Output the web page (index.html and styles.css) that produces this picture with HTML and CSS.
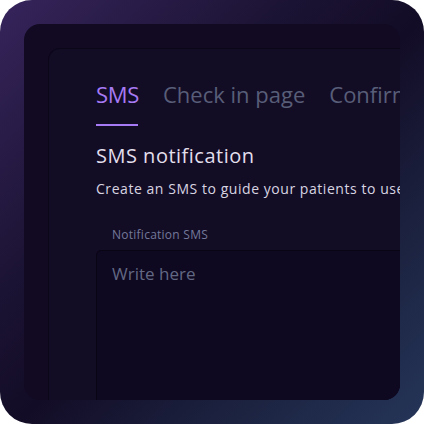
FILE: index.html
```html
<!DOCTYPE html>
<html>
<head>
<meta charset="utf-8">
<link rel="stylesheet" href="styles.css">
</head>
<body>
<div class="frame">
  <div class="panel">
    <div class="sheet">
      <div class="tabs">
        <div class="tab active">SMS</div>
        <div class="tab">Check in page</div>
        <div class="tab">Confirmation</div>
      </div>
      <h1 class="title">SMS notification</h1>
      <p class="desc">Create an SMS to guide your patients to use the check in page</p>
      <div class="label">Notification SMS</div>
      <div class="field">
        <div class="placeholder">Write here</div>
      </div>
    </div>
  </div>
</div>
</body>
</html>
```
FILE: styles.css
```css
* { box-sizing: border-box; }
html, body { margin: 0; padding: 0; background: #ffffff; }
body { font-family: "Open Sans", "DejaVu Sans", sans-serif; }

.frame {
  width: 424px;
  height: 424px;
  border-radius: 32px;
  padding: 24px;
  background: linear-gradient(135deg, #36245b 0%, #1b1333 35%, #130c26 52%, #1a1f3c 72%, #253558 100%);
}

.panel {
  width: 376px;
  height: 376px;
  border-radius: 16px;
  background: #110a22;
  padding: 24px 0 0 24px;
  overflow: hidden;
}

.sheet {
  width: 600px;
  height: 400px;
  background: #130c25;
  border-top: 1px solid #0c0619;
  border-left: 1px solid #0c0619;
  border-top-left-radius: 12px;
  padding: 30px 0 0 47px;
}

.tabs {
  display: flex;
  gap: 24px;
  white-space: nowrap;
}

.tab {
  font-size: 22px;
  line-height: 30px;
  font-weight: 500;
  color: #585e78;
  padding-bottom: 17px;
  position: relative;
}

.tab.active { color: #a67af4; letter-spacing: -0.3px; }
.tab.active::after {
  content: "";
  position: absolute;
  left: 0;
  width: 42px;
  bottom: 0;
  height: 2px;
  background: #a67af4;
}

.title {
  margin: 16px 0 0 0;
  font-size: 20px;
  line-height: 28px;
  font-weight: 500;
  letter-spacing: 0.5px;
  color: #e2dfec;
  white-space: nowrap;
}

.desc {
  margin: 9px 0 0 0;
  font-size: 14px;
  line-height: 20px;
  letter-spacing: 0.55px;
  color: #d8d5e1;
  white-space: nowrap;
}

.label {
  margin: 28px 0 0 16px;
  font-size: 12px;
  line-height: 16px;
  letter-spacing: 0.25px;
  color: #74799a;
}

.field {
  margin-top: 7px;
  width: 500px;
  height: 200px;
  background: #0e0820;
  border: 1px solid #0a0515;
  border-radius: 5px;
  padding: 11px 15px;
}

.placeholder {
  font-size: 17px;
  line-height: 24px;
  font-weight: 500;
  color: #626884;
}
```
